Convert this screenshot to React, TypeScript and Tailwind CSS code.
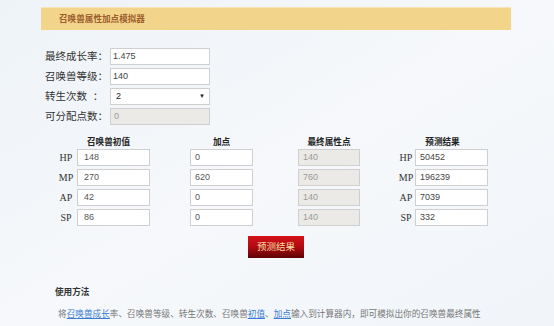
import React from "react";

const cjk = { fontFamily: '"Liberation Sans", "Noto Sans CJK SC", sans-serif' };
const serif = { fontFamily: '"Liberation Serif", "Noto Serif CJK SC", "Noto Sans CJK SC", serif' };

function Field({ value, disabled, className = "" }: { value: string; disabled?: boolean; className?: string }) {
  return (
    <div
      className={`h-[17px] border border-[#cfcfcf] flex items-center text-[9px] ${
        disabled ? "bg-[#ebeae6] text-[#9a9a9a]" : "bg-white text-[#444]"
      } ${className}`}
    >
      {value}
    </div>
  );
}

export default function App() {
  const labels = ["HP", "MP", "AP", "SP"];
  const init = ["148", "270", "42", "86"];
  const add = ["0", "620", "0", "0"];
  const fin = ["140", "760", "140", "140"];
  const res = ["50452", "196239", "7039", "332"];

  return (
    <div className="w-[554px] h-[326px] overflow-hidden bg-gradient-to-br from-[#eef3f7] via-[#f6f8fb] to-[#f1f5f9]" style={cjk}>
      <div className="ml-[41px] w-[470px] pt-[7px]">
        {/* header */}
        <div className="h-[23px] bg-[#f3d48b] border-t border-[#f7e3b6] flex items-center pl-[18px]">
          <span className="text-[8.6px] font-bold text-[#9c5d2c]">召唤兽属性加点模拟器</span>
        </div>

        {/* form */}
        <div className="mt-[18px] pl-[4px] flex flex-col gap-[3px] text-[10.5px] text-[#333]">
          <div className="flex items-center">
            <span className="w-[65px]">最终成长率：</span>
            <Field value="1.475" className="w-[100px] pl-[2px]" />
          </div>
          <div className="flex items-center">
            <span className="w-[65px]">召唤兽等级：</span>
            <Field value="140" className="w-[100px] pl-[2px]" />
          </div>
          <div className="flex items-center">
            <span className="w-[65px]">转生次数&nbsp;&nbsp;：</span>
            <div className="w-[100px] h-[17px] border border-[#cfcfcf] bg-white flex items-center justify-between pl-[5px] pr-[4px] text-[9px] text-[#222]">
              <span>2</span>
              <span className="text-[6px]">▼</span>
            </div>
          </div>
          <div className="flex items-center">
            <span className="w-[65px]">可分配点数：</span>
            <Field value="0" disabled className="w-[100px] pl-[3px]" />
          </div>
        </div>

        {/* table */}
        <div className="mt-[10px] flex">
          {/* col 1 */}
          <div className="ml-[14px] w-[95px] flex flex-col">
            <div className="h-[14px] flex items-center justify-center pl-[12px] text-[8.6px] font-bold text-[#222]">召唤兽初值</div>
            <div className="flex flex-col gap-[3px]">
              {labels.map((l, i) => (
                <div key={l} className="flex items-center">
                  <span className="w-[22px] text-center text-[10px] font-normal text-[#333]" style={serif}>{l}</span>
                  <Field value={init[i]} className="w-[73px] pl-[6px] text-[#555]" />
                </div>
              ))}
            </div>
          </div>
          {/* col 2 */}
          <div className="ml-[40px] w-[63px] flex flex-col">
            <div className="h-[14px] flex items-center justify-center text-[8.6px] font-bold text-[#222]">加点</div>
            <div className="flex flex-col gap-[3px]">
              {add.map((v, i) => (
                <Field key={i} value={v} className="w-[63px] pl-[4px] text-[#555]" />
              ))}
            </div>
          </div>
          {/* col 3 */}
          <div className="ml-[45px] w-[62px] flex flex-col">
            <div className="h-[14px] flex items-center justify-center text-[8.6px] font-bold text-[#222]">最终属性点</div>
            <div className="flex flex-col gap-[3px]">
              {fin.map((v, i) => (
                <Field key={i} value={v} disabled className="w-[62px] pl-[4px]" />
              ))}
            </div>
          </div>
          {/* col 4 */}
          <div className="ml-[37px] w-[91px] flex flex-col">
            <div className="h-[14px] flex items-center justify-center text-[8.6px] font-bold text-[#222]">预测结果</div>
            <div className="flex flex-col gap-[3px]">
              {labels.map((l, i) => (
                <div key={l} className="flex items-center">
                  <span className="w-[18px] text-center text-[10px] font-normal text-[#333]" style={serif}>{l}</span>
                  <Field value={res[i]} className="w-[73px] pl-[4px] text-[#333]" />
                </div>
              ))}
            </div>
          </div>
        </div>

        {/* button */}
        <div className="mt-[10px] flex justify-center">
          <div className="w-[56px] h-[22px] bg-gradient-to-b from-[#d4121a] via-[#b00a10] to-[#5e0406] flex items-center justify-center text-[9.5px] text-[#f4dfa6]">
            预测结果
          </div>
        </div>

        {/* usage */}
        <div className="mt-[28px] pl-[14px] text-[8.6px] font-bold text-[#333] h-[12px] flex items-center">使用方法</div>
        <div className="mt-[10px] pl-[17px] text-[8.65px] text-[#777] whitespace-nowrap">
          将<span className="text-[#3a7bd5] underline">召唤兽成长</span>率、召唤兽等级、转生次数、召唤兽<span className="text-[#3a7bd5] underline">初值</span>、<span className="text-[#3a7bd5] underline">加点</span>输入到计算器内，即可模拟出你的召唤兽最终属性
        </div>
      </div>
    </div>
  );
}
